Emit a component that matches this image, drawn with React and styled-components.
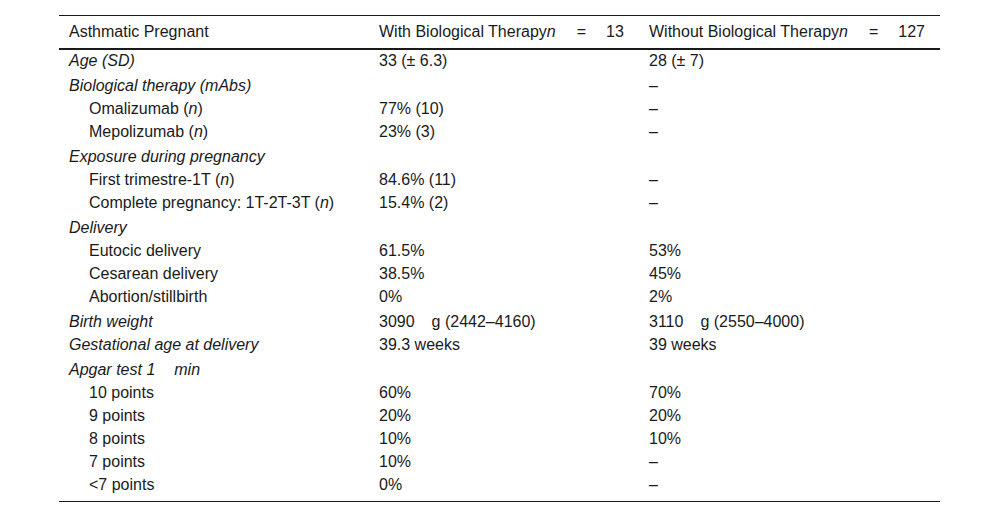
import styled, { createGlobalStyle } from "styled-components";

const GlobalStyle = createGlobalStyle`
  body {
    margin: 0;
    background: #fff;
    font-family: "Liberation Sans", Arial, sans-serif;
    color: #1a1a1a;
  }
`;

const rows = [
  { label: "Age (SD)", italic: true, a: "33 (± 6.3)", b: "28 (± 7)" },
  { label: "Biological therapy (mAbs)", italic: true, a: "", b: "–", group: true },
  { label: "Omalizumab", n: true, sub: true, a: "77% (10)", b: "–" },
  { label: "Mepolizumab", n: true, sub: true, a: "23% (3)", b: "–" },
  { label: "Exposure during pregnancy", italic: true, a: "", b: "", group: true },
  { label: "First trimestre-1T", n: true, sub: true, a: "84.6% (11)", b: "–" },
  { label: "Complete pregnancy: 1T-2T-3T", n: true, sub: true, a: "15.4% (2)", b: "–" },
  { label: "Delivery", italic: true, a: "", b: "", group: true },
  { label: "Eutocic delivery", sub: true, a: "61.5%", b: "53%" },
  { label: "Cesarean delivery", sub: true, a: "38.5%", b: "45%" },
  { label: "Abortion/stillbirth", sub: true, a: "0%", b: "2%" },
  { label: "Birth weight", italic: true, weight: ["3090", "g (2442–4160)"], weightB: ["3110", "g (2550–4000)"], group: true },
  { label: "Gestational age at delivery", italic: true, a: "39.3 weeks", b: "39 weeks" },
  { label: "Apgar test 1", unit: "min", italic: true, a: "", b: "", group: true },
  { label: "10 points", sub: true, a: "60%", b: "70%" },
  { label: "9 points", sub: true, a: "20%", b: "20%" },
  { label: "8 points", sub: true, a: "10%", b: "10%" },
  { label: "7 points", sub: true, a: "10%", b: "–" },
  { label: "<7 points", sub: true, a: "0%", b: "–" },
];

const Page = styled.div`
  padding: 15px 60px 0 59px;
`;

const Table = styled.table`
  width: 881px;
  table-layout: fixed;
  border-collapse: collapse;
  font-size: 16px;
  border-top: 1px solid #1a1a1a;
  border-bottom: 1px solid #1a1a1a;
`;

const HeadCell = styled.th`
  box-sizing: border-box;
  text-align: left;
  font-weight: normal;
  height: 33px;
  padding: 1px 10px 0;
  border-bottom: 2px solid #1a1a1a;
  white-space: nowrap;
  overflow: visible;
  width: ${(p) => (p.$w ? `${p.$w}px` : "auto")};
`;

const Cell = styled.td`
  height: 23px;
  padding: ${(p) => (p.$group ? "2px" : "0")} 10px 0
    ${(p) => (p.$sub ? "30px" : "10px")};
  font-style: ${(p) => (p.$italic ? "italic" : "normal")};
  white-space: nowrap;
  vertical-align: middle;
`;

const LastPad = styled.tr`
  height: 5px;
`;

const Em = styled.i``;

const Gap = styled.span`
  display: inline-block;
  width: ${(p) => p.$w}px;
`;

const N = ({ count }) => (
  <>
    <Em>n</Em>
    <Gap $w={21} />=<Gap $w={20} />
    {count}
  </>
);

const Weight = ({ v }) => (
  <>
    {v[0]}
    <Gap $w={17} />
    {v[1]}
  </>
);

export default function App() {
  return (
    <Page>
      <GlobalStyle />
      <Table>
        <thead>
          <tr>
            <HeadCell $w={310}>Asthmatic Pregnant</HeadCell>
            <HeadCell $w={270}>
              With Biological Therapy<N count="13" />
            </HeadCell>
            <HeadCell>
              Without Biological Therapy<N count="127" />
            </HeadCell>
          </tr>
        </thead>
        <tbody>
          {rows.map((r) => (
            <tr key={r.label}>
              <Cell $italic={r.italic} $sub={r.sub} $group={r.group}>
                {r.label}
                {r.n && (
                  <>
                    {" ("}
                    <Em>n</Em>)
                  </>
                )}
                {r.unit && (
                  <>
                    <Gap $w={19} />
                    {r.unit}
                  </>
                )}
              </Cell>
              <Cell $group={r.group}>{r.weight ? <Weight v={r.weight} /> : r.a}</Cell>
              <Cell $group={r.group}>{r.weightB ? <Weight v={r.weightB} /> : r.b}</Cell>
            </tr>
          ))}
          <LastPad />
        </tbody>
      </Table>
    </Page>
  );
}
